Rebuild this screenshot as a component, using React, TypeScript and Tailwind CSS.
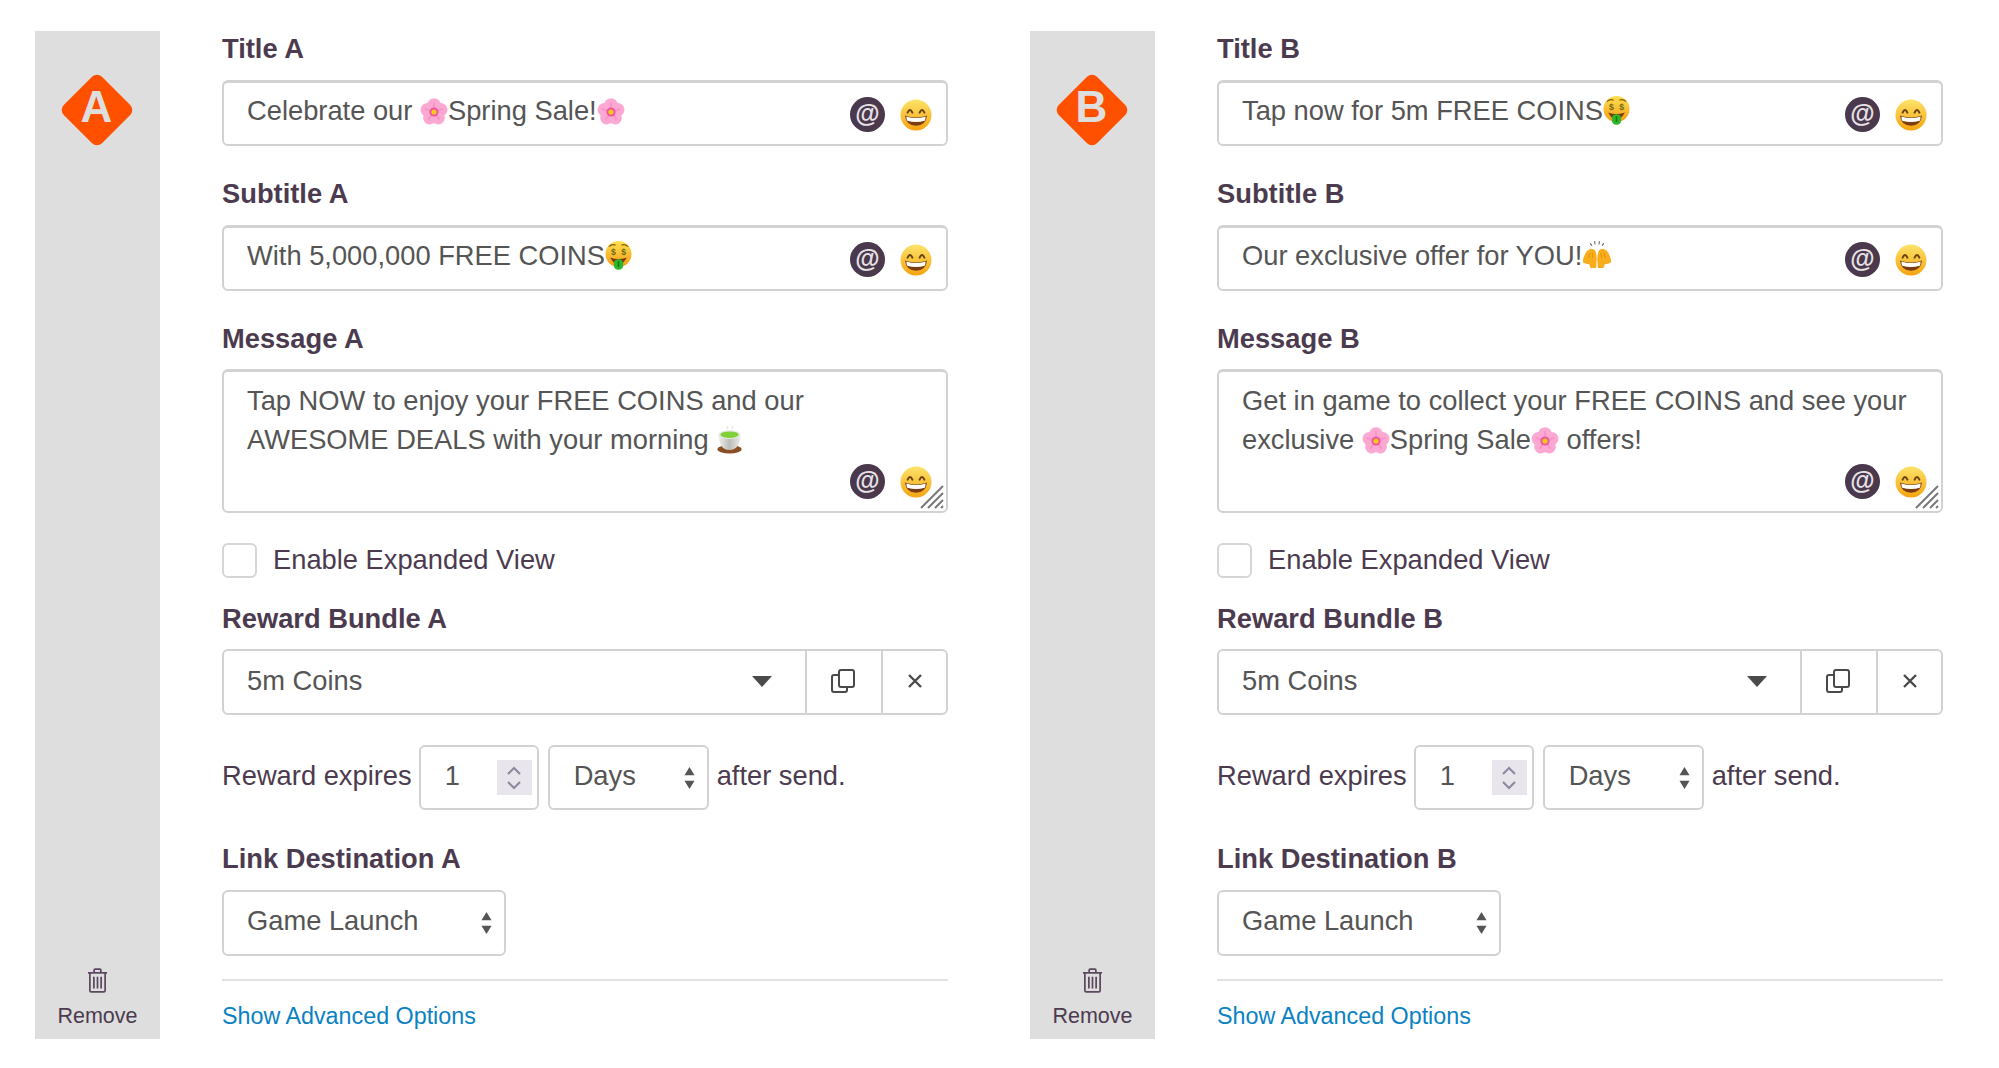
import React from "react";

const FONT = "font-['Liberation_Sans',Arial,sans-serif]";

function Flower() {
  return (
    <svg viewBox="0 0 28 28" className="inline-block w-[28px] h-[28px] align-[-6px]">
      {[0, 72, 144, 216, 288].map((a) => (
        <ellipse key={a} cx="14" cy="7.4" rx="6.8" ry="7.2" fill="#fba9d2" transform={`rotate(${a} 14 14)`} />
      ))}
      {[0, 72, 144, 216, 288].map((a) => (
        <path key={a} d="M14 12 L14 5" stroke="#f583bd" strokeWidth="1.8" strokeLinecap="round" transform={`rotate(${a} 14 14)`} opacity="0.55" />
      ))}
      <circle cx="14" cy="14" r="4.6" fill="#f0559f" />
      <circle cx="14" cy="14" r="2.6" fill="#f8c81e" />
    </svg>
  );
}

function Money() {
  return (
    <svg viewBox="0 0 28 30" className="inline-block w-[27px] h-[29px] align-[-5px]">
      <defs>
        <linearGradient id="mf" x1="0" y1="0" x2="0" y2="1">
          <stop offset="0" stopColor="#fde050" />
          <stop offset="1" stopColor="#f59c14" />
        </linearGradient>
      </defs>
      <circle cx="14" cy="13.5" r="13.5" fill="url(#mf)" />
      <path d="M4 5.8 Q7.5 2.6 11 4.4" stroke="#8a5a10" strokeWidth="1.2" fill="none" />
      <path d="M17 4.4 Q20.5 2.6 24 5.8" stroke="#8a5a10" strokeWidth="1.2" fill="none" />
      <text x="8.6" y="14" textAnchor="middle" fontSize="9" fontWeight="700" fill="#6a6a14">$</text>
      <text x="19.4" y="14" textAnchor="middle" fontSize="9" fontWeight="700" fill="#6a6a14">$</text>
      <path d="M5.5 17 Q14 20.5 22.5 17 Q19.5 24 14 24 Q8.5 24 5.5 17 Z" fill="#7a3a10" />
      <rect x="9.2" y="19" width="9.6" height="10.8" rx="4.4" fill="#2fb52a" />
      <path d="M14 21 L14 27" stroke="#0f7a16" strokeWidth="1.6" />
    </svg>
  );
}

function Hands() {
  return (
    <svg viewBox="0 0 30 30" className="inline-block w-[30px] h-[30px] align-[-5px]">
      <g fill="#f8ad1c" stroke="#f8ad1c" strokeWidth="1.2" strokeLinejoin="round">
        <path d="M1.4 22 Q2 15 6 11 Q9 8.5 10 9.6 Q12.5 9.6 13.4 13 Q14.4 17 14 21 L13.6 27.5 L9 27.5 L7.6 23.4 Q5.4 24 1.4 22 Z" />
        <path d="M28.6 22 Q28 15 24 11 Q21 8.5 20 9.6 Q17.5 9.6 16.6 13 Q15.6 17 16 21 L16.4 27.5 L21 27.5 L22.4 23.4 Q24.6 24 28.6 22 Z" />
      </g>
      <path d="M8 13 L6.6 18 M11 13 L10.4 18 M22 13 L23.4 18 M19 13 L19.6 18" stroke="#e08e10" strokeWidth="0.9" />
      <g stroke="#777777" strokeWidth="1.2" strokeLinecap="round">
        <path d="M8.5 3.6 L9.6 5.4" />
        <path d="M12.6 1.6 L13 3.8" />
        <path d="M17.4 1.6 L17 3.8" />
        <path d="M21.5 3.6 L20.4 5.4" />
      </g>
    </svg>
  );
}

function Tea() {
  return (
    <svg viewBox="0 0 28 30" className="inline-block w-[27px] h-[29px] align-[-5px]">
      <defs>
        <linearGradient id="cup" x1="0" y1="0" x2="1" y2="0">
          <stop offset="0" stopColor="#f0f0ec" />
          <stop offset="0.5" stopColor="#bdbdb8" />
          <stop offset="1" stopColor="#ecece8" />
        </linearGradient>
      </defs>
      <ellipse cx="14" cy="25" rx="12.6" ry="4.4" fill="#8a4f24" />
      <path d="M2.5 10 Q3 25.5 14 26 Q25 25.5 25.5 10 Z" fill="url(#cup)" />
      <ellipse cx="14" cy="10" rx="11.5" ry="4.6" fill="#e8e8e4" />
      <ellipse cx="14" cy="10" rx="9.4" ry="3.4" fill="#7fd03a" />
      <path d="M11 4 Q13 2.5 12 .8 M16 4 Q18 2.5 17 .8" stroke="#e6e6e6" strokeWidth="1.2" fill="none" />
    </svg>
  );
}

function Grin() {
  return (
    <svg viewBox="0 0 32 32" className="w-[32px] h-[32px] shrink-0">
      <defs>
        <linearGradient id="gf" x1="0" y1="0" x2="0" y2="1">
          <stop offset="0" stopColor="#fde36a" />
          <stop offset="1" stopColor="#f5a40f" />
        </linearGradient>
      </defs>
      <circle cx="16" cy="16" r="15.5" fill="url(#gf)" />
      <path d="M7.6 13.6 Q10 8.6 12.4 13.6" stroke="#6b4310" strokeWidth="2" fill="none" strokeLinecap="round" />
      <path d="M19.6 13.6 Q22 8.6 24.4 13.6" stroke="#6b4310" strokeWidth="2" fill="none" strokeLinecap="round" />
      <path d="M5 16.6 Q16 20.4 27 16.6 Q26 26.5 16 26.8 Q6 26.5 5 16.6 Z" fill="#7a3c10" />
      <path d="M6.4 17.6 Q16 20.6 25.6 17.6 Q25.6 20.6 24.8 21.8 Q16 24.2 7.2 21.8 Q6.4 20.4 6.4 17.6 Z" fill="#ffffff" />
    </svg>
  );
}

function At() {
  return (
    <div className="w-[35px] h-[35px] shrink-0 rounded-full bg-[#4a384c] flex items-center justify-center text-[#e6e2e6] text-[25px] leading-none font-bold pb-[2px]">
      @
    </div>
  );
}

function Icons() {
  return (
    <div className="flex items-center gap-[15px]">
      <At />
      <Grin />
    </div>
  );
}

function Label({ children, className = "" }: { children: React.ReactNode; className?: string }) {
  return <div className={`h-[34px] leading-[35px] text-[27.3px] font-bold text-[#4c3b4f] ${className}`}>{children}</div>;
}

function TextBox({ children }: { children: React.ReactNode }) {
  return (
    <div className="h-[66px] mt-[15px] pl-[23px] pr-[14px] flex items-center justify-between rounded-[6px] bg-white border-[2px] border-[#d2d2d2] border-t-[3px] text-[27.3px] text-[#555555] whitespace-nowrap">
      <div className="pb-[4px]">{children}</div>
      <div className="pt-[2px]">
        <Icons />
      </div>
    </div>
  );
}

function Arrows() {
  return (
    <svg viewBox="0 0 12 26" className="w-[11px] h-[26px] shrink-0">
      <path d="M6 1 L11.5 10 L.5 10 Z M6 25 L.5 16 L11.5 16 Z" fill="#555555" />
    </svg>
  );
}

function Grip() {
  return (
    <svg viewBox="0 0 24 24" className="absolute right-[2px] bottom-[2px] w-[24px] h-[24px]">
      <g stroke="#777777" strokeWidth="2">
        <path d="M1 23 L23 1" />
        <path d="M8 23 L23 8" />
        <path d="M15 23 L23 15" />
        <path d="M21 23 L23 21" />
      </g>
    </svg>
  );
}

function Copy() {
  return (
    <svg viewBox="0 0 26 26" className="w-[26px] h-[26px]" fill="none" stroke="#4a4a4a" strokeWidth="2">
      <rect x="9" y="2" width="15" height="17" rx="2" />
      <path d="M9 7 L4 7 Q2 7 2 9 L2 22 Q2 24 4 24 L15 24 Q17 24 17 22 L17 19" />
    </svg>
  );
}

function Trash() {
  return (
    <svg viewBox="0 0 22 26" className="w-[21px] h-[25px]" fill="none" stroke="#5b475f" strokeWidth="1.8">
      <path d="M1 5 L21 5" />
      <path d="M7.5 5 L7.5 2 Q7.5 1 8.5 1 L13.5 1 Q14.5 1 14.5 2 L14.5 5" />
      <path d="M3 5 L3 23.5 Q3 25 4.5 25 L17.5 25 Q19 25 19 23.5 L19 5" />
      <path d="M7.2 9 L7.2 21.5 M11 9 L11 21.5 M14.8 9 L14.8 21.5" />
    </svg>
  );
}

type Data = {
  k: string;
  title: React.ReactNode;
  subtitle: React.ReactNode;
  message: React.ReactNode;
};

function Panel({ k, title, subtitle, message }: Data) {
  return (
    <div className="flex w-[913px]">
      <div className="w-[125px] shrink-0 bg-[#dedede] flex flex-col items-center justify-between pt-[43px] pb-[9px]">
        <div className="relative w-[72px] h-[72px] mr-[2px] flex items-center justify-center">
          <div className="w-[54px] h-[54px] rotate-45 rounded-[7px] bg-[#ff5000]" />
          <div className="absolute inset-0 flex items-center justify-center pb-[6px] text-[44px] leading-none font-bold text-[#dedede]">
            {k}
          </div>
        </div>
        <div className="flex flex-col items-center text-[#4c3b4f]">
          <Trash />
          <div className="text-[21.5px] leading-[28px] mt-[9px]">Remove</div>
        </div>
      </div>
      <div className="w-[726px] ml-[62px]">
        <Label>Title {k}</Label>
        <TextBox>{title}</TextBox>
        <Label className="mt-[30px]">Subtitle {k}</Label>
        <TextBox>{subtitle}</TextBox>
        <Label className="mt-[30px]">Message {k}</Label>
        <div className="relative h-[144px] mt-[14px] pl-[23px] pr-[14px] pt-[9px] rounded-[6px] bg-white border-[2px] border-[#d2d2d2] border-t-[3px] text-[27.3px] leading-[39px] text-[#555555]">
          <div className="[&>div]:h-[39px]">
            {message}
          </div>
          <div className="absolute right-[14px] bottom-[12px]">
            <Icons />
          </div>
          <Grip />
        </div>
        <div className="mt-[29px] h-[36px] flex items-center">
          <div className="w-[35px] h-[35px] rounded-[6px] bg-white border-[2px] border-[#d6d6d6]" />
          <div className="ml-[16px] text-[27.3px] text-[#4c3b4f]">Enable Expanded View</div>
        </div>
        <Label className="mt-[23px]">Reward Bundle {k}</Label>
        <div className="mt-[14px] h-[66px] flex rounded-[6px] bg-white border-[2px] border-[#d2d2d2] text-[27.3px] text-[#555555]">
          <div className="flex-1 pl-[23px] pr-[33px] flex items-center justify-between border-r-[2px] border-[#d2d2d2] pb-[2px]">
            <span>5m Coins</span>
            <svg viewBox="0 0 20 11" className="w-[20px] h-[11px]">
              <path d="M0 0 L20 0 L10 11 Z" fill="#4a4a4a" />
            </svg>
          </div>
          <div className="w-[76px] pb-[3px] pr-[2px] flex items-center justify-center border-r-[2px] border-[#d2d2d2]">
            <Copy />
          </div>
          <div className="w-[63px] pb-[2px] flex items-center justify-center">
            <svg viewBox="0 0 14 14" className="w-[14px] h-[14px]" stroke="#4a4a4a" strokeWidth="2.4">
              <path d="M1 1 L13 13 M13 1 L1 13" />
            </svg>
          </div>
        </div>
        <div className="mt-[30px] h-[65px] flex items-center text-[27.3px] text-[#4c3b4f]">
          <span className="pb-[2px]">Reward expires</span>
          <div className="ml-[7px] w-[120px] h-[65px] pl-[24px] pr-[5px] flex items-center justify-between rounded-[6px] bg-white border-[2px] border-[#d2d2d2] text-[#555555]">
            <span className="pb-[2px]">1</span>
            <div className="w-[35px] h-[35px] bg-[#e8e6ec] flex items-center justify-center">
              <svg viewBox="0 0 16 26" className="w-[16px] h-[26px]" fill="none" stroke="#9089a0" strokeWidth="2.2">
                <path d="M2 9 L8 3 L14 9 M2 17 L8 23 L14 17" />
              </svg>
            </div>
          </div>
          <div className="ml-[9px] w-[161px] h-[65px] pl-[24px] pr-[12px] flex items-center justify-between rounded-[6px] bg-white border-[2px] border-[#d2d2d2] text-[#555555]">
            <span className="pb-[2px]">Days</span>
            <Arrows />
          </div>
          <span className="ml-[8px] pb-[2px]">after send.</span>
        </div>
        <Label className="mt-[31px]">Link Destination {k}</Label>
        <div className="mt-[15px] w-[284px] h-[66px] pl-[23px] pr-[12px] flex items-center justify-between rounded-[6px] bg-white border-[2px] border-[#d2d2d2] text-[27.3px] text-[#555555]">
          <span className="pb-[3px]">Game Launch</span>
          <Arrows />
        </div>
        <div className="mt-[23px] h-[2px] bg-[#e2e2e2]" />
        <div className="mt-[20px] h-[30px] leading-[30px] text-[23.3px] text-[#0a82c2]">Show Advanced Options</div>
      </div>
    </div>
  );
}

export default function App() {
  return (
    <div className={`${FONT} w-[1999px] h-[1068px] overflow-hidden bg-white pl-[35px] pt-[31px] flex gap-[82px]`}>
      <div className="flex h-[1008px]">
        <Panel
          k="A"
          title={<>Celebrate our <Flower />Spring Sale!<Flower /></>}
          subtitle={<>With 5,000,000 FREE COINS<Money /></>}
          message={<><div>Tap NOW to enjoy your FREE COINS and our</div><div>AWESOME DEALS with your morning <Tea /></div></>}
        />
      </div>
      <div className="flex h-[1008px]">
        <Panel
          k="B"
          title={<>Tap now for 5m FREE COINS<Money /></>}
          subtitle={<>Our exclusive offer for YOU!<Hands /></>}
          message={<><div>Get in game to collect your FREE COINS and see your</div><div>exclusive <Flower />Spring Sale<Flower /> offers!</div></>}
        />
      </div>
    </div>
  );
}
